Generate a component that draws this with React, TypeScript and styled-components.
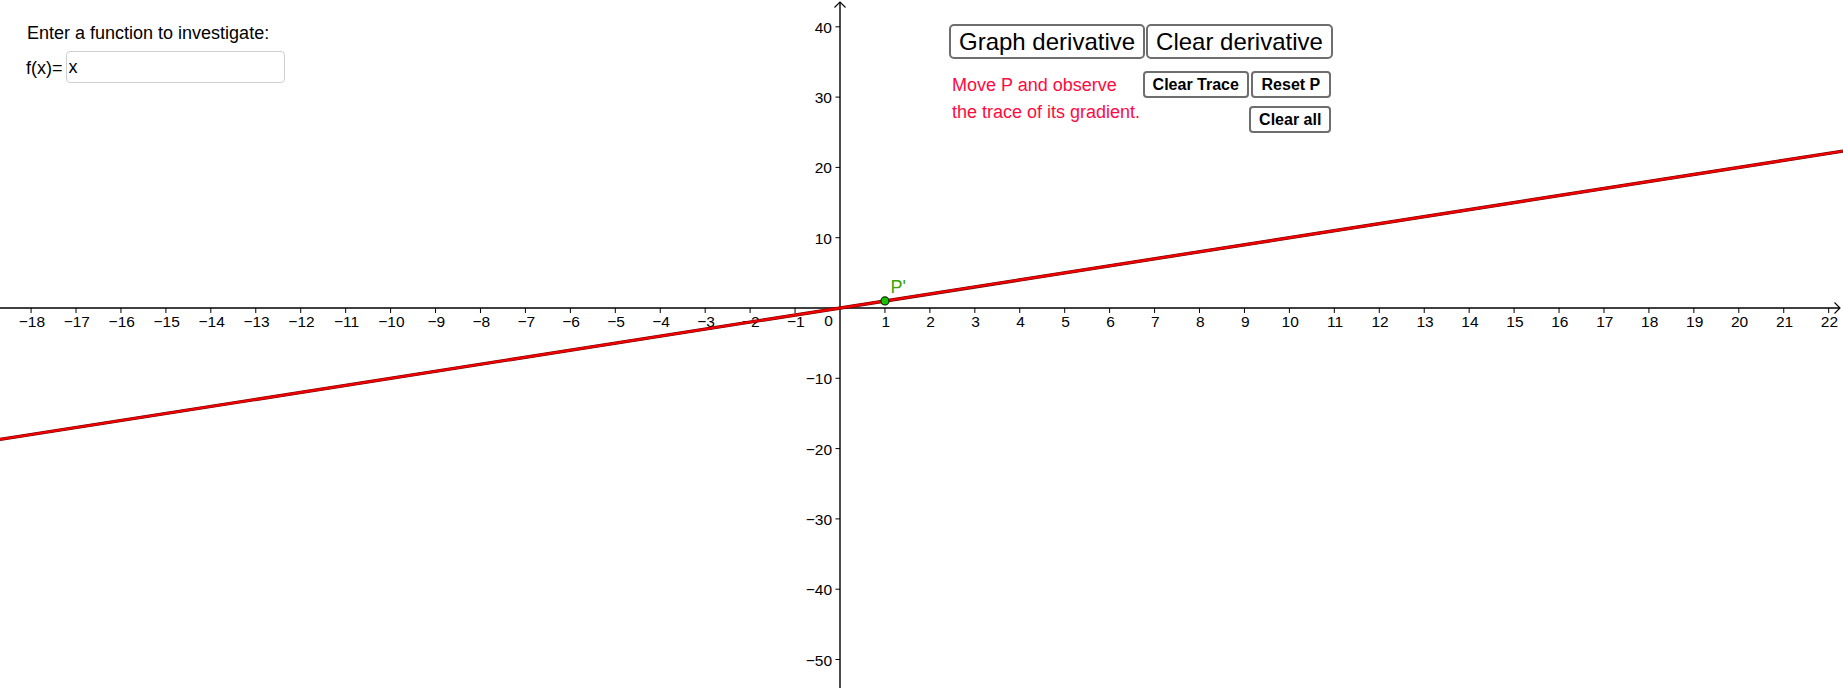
import React from "react";
import styled, { createGlobalStyle } from "styled-components";

const GlobalStyle = createGlobalStyle`
  html, body {
    margin: 0;
    padding: 0;
    background: #ffffff;
    overflow: hidden;
  }
  body {
    font-family: "Liberation Sans", Arial, Helvetica, sans-serif;
    color: #000;
  }
`;

const Canvas = styled.div`
  position: relative;
  width: 1843px;
  height: 691px;
  background: #ffffff;
  overflow: hidden;
`;

const GraphSvg = styled.svg`
  display: block;
  width: 1843px;
  height: 691px;
  font-family: "Liberation Sans", Arial, Helvetica, sans-serif;
`;

const InputPanel = styled.div`
  position: absolute;
  top: 24px;
  left: 27px;
  display: flex;
  flex-direction: column;
  gap: 9px;
`;

const Prompt = styled.div`
  font-size: 18px;
  line-height: 18px;
  color: #000;
`;

const InputRow = styled.div`
  display: flex;
  align-items: center;
  gap: 3px;
  margin-left: -1px;
`;

const InputLabel = styled.span`
  font-size: 18px;
  line-height: 18px;
  padding-top: 1px;
`;

const FunctionInput = styled.input`
  box-sizing: border-box;
  width: 219px;
  height: 32px;
  margin: 0;
  padding: 1px 2px 0 2px;
  border: 1px solid #cfcfcf;
  border-radius: 4px;
  font-family: "Liberation Sans", Arial, Helvetica, sans-serif;
  font-size: 18px;
  color: #000;
  background: #fff;
  outline: none;
`;

const ControlPanel = styled.div`
  position: absolute;
  top: 24px;
  left: 949px;
  display: flex;
  flex-direction: column;
  gap: 12px;
`;

const BigRow = styled.div`
  display: flex;
  gap: 1px;
`;

const Button = styled.button<{ $size: "big" | "small" }>`
  box-sizing: border-box;
  margin: 0;
  height: ${(p) => (p.$size === "big" ? "35px" : "27px")};
  padding: 0 ${(p) => (p.$size === "big" ? "8px" : "7.8px")};
  border: 2px solid #6e6e6e;
  border-radius: ${(p) => (p.$size === "big" ? "5px" : "4px")};
  background: #ffffff;
  color: #000;
  font-family: "Liberation Sans", Arial, Helvetica, sans-serif;
  font-size: ${(p) => (p.$size === "big" ? "24px" : "16px")};
  font-weight: ${(p) => (p.$size === "big" ? 400 : 700)};
  line-height: 1;
  white-space: nowrap;
  cursor: pointer;
`;

const LowerRow = styled.div`
  display: flex;
  align-items: flex-start;
`;

const Note = styled.div`
  margin: 1px 0 0 3px;
  color: #ff0a3f;
  font-size: 18px;
  line-height: 26.6px;
  white-space: nowrap;
`;

const SmallGrid = styled.div`
  display: grid;
  grid-template-columns: auto auto;
  column-gap: 2px;
  row-gap: 8.4px;
  margin-left: 2.7px;
`;

const ClearAllCell = styled.div`
  grid-column: 2;
  margin-left: -1.4px;
`;

const OX = 840;
const OY = 308;
const UX = 44.94;
const UY = 7.03;

const xTicks = Array.from({ length: 41 }, (_, i) => i - 18).filter((k) => k !== 0);
const yTicks = [40, 30, 20, 10, -10, -20, -30, -40, -50];

const fmt = (n: number) => (n < 0 ? `\u2212${Math.abs(n)}` : `${n}`);

const Graph: React.FC = () => {
  const xLeft = -OX / UX;
  const xRight = (1843 - OX) / UX;
  const y1 = OY - xLeft * UY;
  const y2 = OY - xRight * UY;
  return (
    <GraphSvg viewBox="0 0 1843 691" xmlns="http://www.w3.org/2000/svg">
      {/* axes */}
      <line x1={0} y1={OY} x2={1840} y2={OY} stroke="#000" strokeWidth={1.4} />
      <polyline points={`1834.5,302.5 1840,308 1834.5,313.5`} fill="none" stroke="#000" strokeWidth={1.1} />
      <line x1={OX} y1={2} x2={OX} y2={688} stroke="#000" strokeWidth={1.4} />
      <polyline points={`834.5,7.5 840,2 845.5,7.5`} fill="none" stroke="#000" strokeWidth={1.1} />

      {xTicks.map((k) => {
        const x = OX + k * UX;
        return (
          <g key={`x${k}`}>
            <line x1={x} y1={OY} x2={x} y2={OY + 5} stroke="#000" strokeWidth={1} />
            <text x={x + 0.8} y={326.8} fontSize={15.5} textAnchor="middle" fill="#000">
              {fmt(k)}
            </text>
          </g>
        );
      })}
      <text x={832.8} y={325.8} fontSize={15.5} textAnchor="end" fill="#000">
        0
      </text>

      {yTicks.map((k) => {
        const y = OY - k * UY;
        return (
          <g key={`y${k}`}>
            <line x1={OX - 4.5} y1={y} x2={OX} y2={y} stroke="#000" strokeWidth={1} />
            <text x={832} y={y + 6} fontSize={15.5} textAnchor="end" fill="#000">
              {fmt(k)}
            </text>
          </g>
        );
      })}

      {/* f(x) = x */}
      <line x1={0} y1={y1} x2={1843} y2={y2} stroke="#6a0000" strokeWidth={3.4} />
      <line x1={0} y1={y1} x2={1843} y2={y2} stroke="#ee0000" strokeWidth={2.4} />

      {/* point P' */}
      <circle cx={OX + UX} cy={OY - UY} r={4} fill="#17c400" stroke="#0a2a00" strokeWidth={1.2} />
      <text x={890.5} y={293} fontSize={18} fill="#3aa400">
        P'
      </text>
    </GraphSvg>
  );
};

export default function App() {
  return (
    <>
      <GlobalStyle />
      <Canvas>
        <Graph />
        <InputPanel>
          <Prompt>Enter a function to investigate:</Prompt>
          <InputRow>
            <InputLabel>f(x)=</InputLabel>
            <FunctionInput defaultValue="x" />
          </InputRow>
        </InputPanel>
        <ControlPanel>
          <BigRow>
            <Button $size="big">Graph derivative</Button>
            <Button $size="big">Clear derivative</Button>
          </BigRow>
          <LowerRow>
            <Note>
              Move P and observe
              <br />
              the trace of its gradient.
            </Note>
            <SmallGrid>
              <Button $size="small">Clear Trace</Button>
              <Button $size="small">Reset P</Button>
              <ClearAllCell>
                <Button $size="small">Clear all</Button>
              </ClearAllCell>
            </SmallGrid>
          </LowerRow>
        </ControlPanel>
      </Canvas>
    </>
  );
}
